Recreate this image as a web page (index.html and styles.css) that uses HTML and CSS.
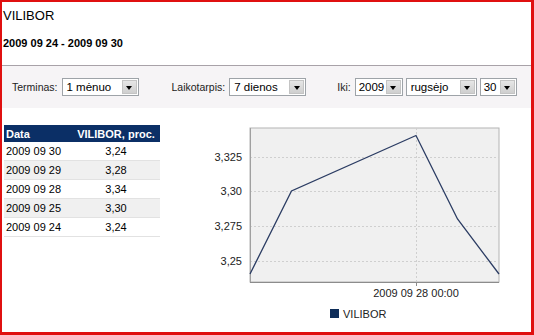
FILE: index.html
```html
<!DOCTYPE html>
<html lang="lt">
<head>
<meta charset="UTF-8">
<title>VILIBOR</title>
<link rel="stylesheet" href="styles.css">
</head>
<body>
<div class="frame">
	<h1 class="title">VILIBOR</h1>
	<p class="range">2009 09 24 - 2009 09 30</p>
	<form class="filters">
		<label class="lbl">Terminas:</label>
		<span class="select w-term"><span class="val">1 mėnuo</span><span class="arrow"></span></span>
		<label class="lbl gap">Laikotarpis:</label>
		<span class="select w-term"><span class="val">7 dienos</span><span class="arrow"></span></span>
		<label class="lbl gap gap-end">Iki:</label>
		<span class="select w-year"><span class="val">2009</span><span class="arrow"></span></span>
		<span class="select w-month"><span class="val">rugsėjo</span><span class="arrow"></span></span>
		<span class="select w-day"><span class="val">30</span><span class="arrow"></span></span>
	</form>
	<div class="content">
		<table class="rates">
			<thead>
				<tr><th class="c-date">Data</th><th>VILIBOR, proc.</th></tr>
			</thead>
			<tbody>
				<tr><td class="c-date">2009 09 30</td><td>3,24</td></tr>
				<tr class="alt"><td class="c-date">2009 09 29</td><td>3,28</td></tr>
				<tr><td class="c-date">2009 09 28</td><td>3,34</td></tr>
				<tr class="alt"><td class="c-date">2009 09 25</td><td>3,30</td></tr>
				<tr><td class="c-date">2009 09 24</td><td>3,24</td></tr>
			</tbody>
		</table>
		<svg class="chart" width="330" height="205" viewBox="0 0 330 205">
			<rect x="50" y="8" width="249" height="154" fill="#f0f0f0" stroke="#b4b4b4"/>
			<g stroke="#cfcfcf" stroke-dasharray="2,2">
				<line x1="50" y1="37.5" x2="299" y2="37.5"/>
				<line x1="50" y1="71.5" x2="299" y2="71.5"/>
				<line x1="50" y1="106.5" x2="299" y2="106.5"/>
				<line x1="50" y1="141.5" x2="299" y2="141.5"/>
				<line x1="216.5" y1="8" x2="216.5" y2="162"/>
			</g>
			<line x1="50" y1="162.5" x2="299" y2="162.5" stroke="#8c8c8c"/>
			<line x1="50.5" y1="8" x2="50.5" y2="162" stroke="#a0a0a0"/>
			<line x1="216.5" y1="162" x2="216.5" y2="166" stroke="#8c8c8c"/>
			<g class="axis" text-anchor="end">
				<text x="42" y="41">3,325</text>
				<text x="42" y="75">3,30</text>
				<text x="42" y="110">3,275</text>
				<text x="42" y="145">3,25</text>
			</g>
			<polyline points="50,154 91.5,71 216,15.5 257.5,99 299,154" fill="none" stroke="#2b3c63" stroke-width="1.3"/>
			<text class="axis" x="216" y="177" text-anchor="middle">2009 09 28 00:00</text>
			<rect x="130" y="189" width="9" height="9" fill="#0e2d59"/>
			<text class="axis" x="143" y="198">VILIBOR</text>
		</svg>
	</div>
</div>
</body>
</html>
```

FILE: styles.css
```css
html,body{
	margin:0;
	padding:0;
	background:#fff;
}
body{
	font-family:"Liberation Sans",Arial,sans-serif;
	font-size:11px;
	color:#000;
}
.frame{
	box-sizing:border-box;
	width:534px;
	height:335px;
	border:2px solid #e01010;
	border-right-width:3px;
	border-bottom-width:3px;
	overflow:hidden;
}
.title{
	margin:6px 0 0 1px;
	font-size:13px;
	font-weight:normal;
	line-height:16px;
}
.range{
	margin:12px 0 0 1px;
	font-weight:bold;
	line-height:14px;
}
.filters{
	margin:15px 0 0;
	border-top:1px solid #a8a2a8;
	background:#f6f4f6;
	box-sizing:border-box;
	height:43px;
	padding:0 0 0 10px;
	display:flex;
	align-items:center;
}
.lbl{
	color:#222;
	font-size:10.5px;
	margin-right:4px;
}
.lbl.gap{
	margin-left:30px;
}
.lbl.gap-end{
	margin-left:28px;
}
.select{
	display:inline-flex;
	align-items:stretch;
	box-sizing:border-box;
	height:18px;
	border:1px solid #9ea3a8;
	background:#fff;
	margin-right:3px;
}
.val{
	flex:1;
	padding-left:4px;
	line-height:16px;
	font-size:11.5px;
	white-space:nowrap;
}
.w-year .val,.w-day .val{
	padding-left:3px;
}
.arrow{
	width:15px;
	margin:1px;
	box-sizing:border-box;
	background:linear-gradient(#e6e6e6,#cfcfcf);
	border:1px solid #c4c4c4;
	display:flex;
	align-items:center;
	justify-content:center;
}
.arrow::after{
	content:"";
	border-left:3.5px solid transparent;
	border-right:3.5px solid transparent;
	border-top:4px solid #000;
	margin-top:1px;
}
.w-term{width:77px;}
.w-year{width:48px;}
.w-month{width:71px;}
.w-day{width:37px;}
.content{
	display:flex;
	align-items:flex-start;
	margin-top:10px;
}
.rates{
	margin:7px 0 0 2px;
	width:156px;
	border-collapse:collapse;
}
.rates th{
	background:#0b2f66;
	color:#fff;
	font-weight:bold;
	height:17px;
	padding:0 2px;
	text-align:center;
}
.rates th.c-date,.rates td.c-date{
	text-align:left;
	width:64px;
}
.rates td{
	height:18px;
	padding:0 2px;
	text-align:center;
	border-bottom:1px solid #e2e2e2;
}
.rates tr.alt td{
	background:#f0f0f0;
}
.chart{
	display:block;
	margin:2px 0 0 40px;
}
.chart text{
	font-family:"Liberation Sans",Arial,sans-serif;
	font-size:11px;
	fill:#222;
}
```
